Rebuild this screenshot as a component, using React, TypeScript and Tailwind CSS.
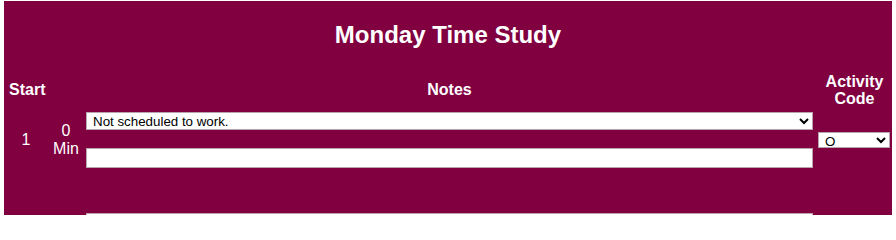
import React from 'react'

export default function App() {
  return (
    <div className="w-[896px] h-[215px] bg-white overflow-hidden pt-px pl-[4px] pr-[4px]">
      <div className="h-[214px] bg-[#800040] text-white font-['Liberation_Sans',Arial,sans-serif]">
        {/* Title */}
        <div className="h-[71px] pt-[20px] text-center text-[24px] leading-[28px] font-bold">
          Monday Time Study
        </div>

        {/* Header row */}
        <div className="grid grid-cols-[82px_727px_79px] items-center h-[36px] text-[16px] font-bold">
          <div className="pl-[5px] leading-[18px]">Start</div>
          <div className="text-center leading-[18px]">Notes</div>
          <div className="text-center leading-[17px] pl-[4px]">
            Activity
            <br />
            Code
          </div>
        </div>

        {/* Row 1 */}
        <div className="mt-[4px] grid grid-cols-[82px_727px_79px] items-center h-[56px] text-[16px]">
          <div className="grid grid-cols-[44px_38px] items-center">
            <div className="text-center leading-[18px]">1</div>
            <div className="text-center leading-[18px] pr-[2px]">
              0
              <br />
              Min
            </div>
          </div>
          <div className="flex flex-col gap-[18px]">
            <select
              defaultValue="ns"
              className="h-[18px] w-full bg-white text-black text-[13.33px] border border-[#b8a3ae] pl-[2px]"
            >
              <option value="ns">Not scheduled to work.</option>
            </select>
            <input type="text" className="h-[20px] w-full bg-white text-black text-[13.33px] border border-[#b8a3ae]" />
          </div>
          <div className="pl-[5px] pt-[2px]">
            <select
              defaultValue="O"
              className="h-[16px] w-[72px] bg-white text-black text-[13.33px] border border-[#b8a3ae] pl-[2px]"
            >
              <option value="O">O</option>
            </select>
          </div>
        </div>

        {/* Row 2 (partially visible) */}
        <div className="mt-[45px] grid grid-cols-[82px_727px_79px]">
          <div />
          <select className="h-[18px] w-full bg-white text-black text-[13.33px] border border-[#b8a3ae]">
            <option>&nbsp;</option>
          </select>
          <div />
        </div>
      </div>
    </div>
  )
}
